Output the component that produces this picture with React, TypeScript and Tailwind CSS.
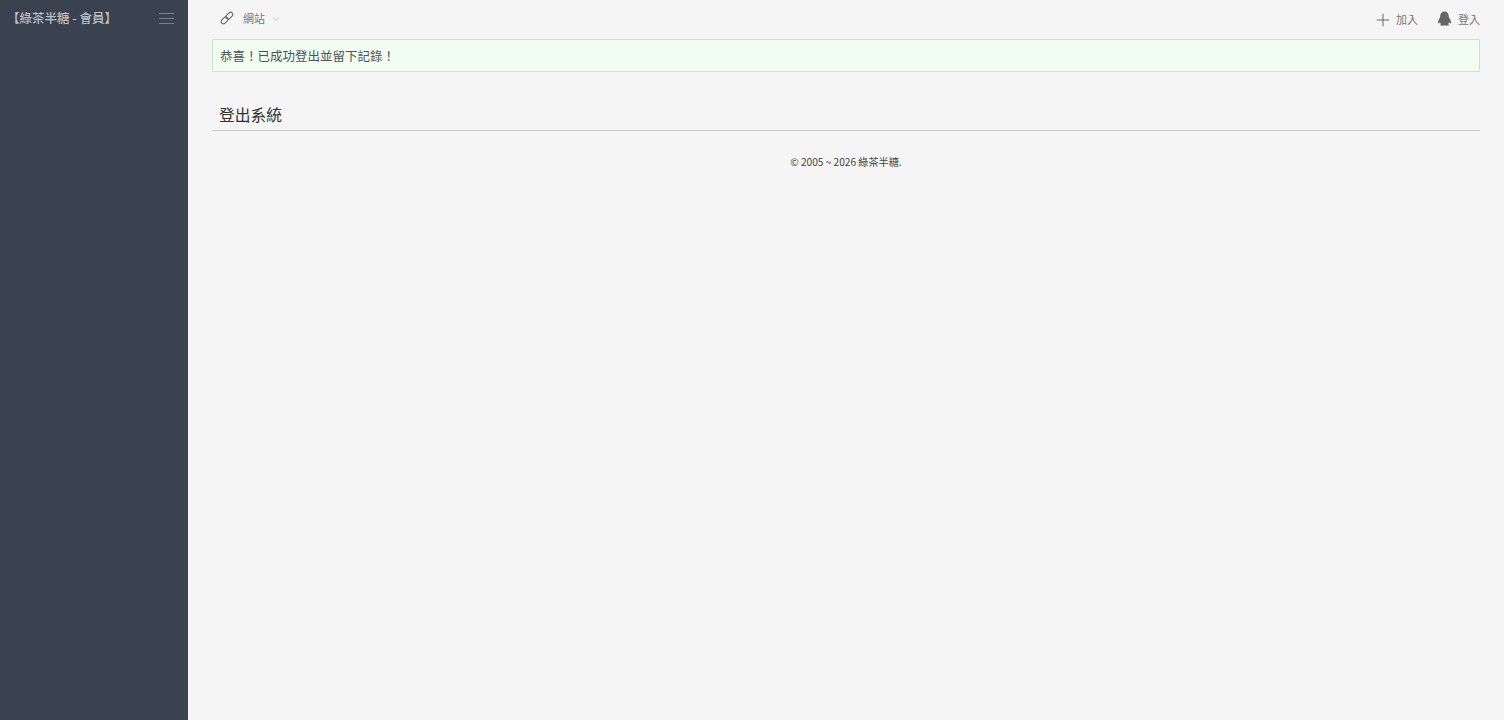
import { ChevronDown, Plus } from "lucide-react";

const font = "font-['Noto_Sans_CJK_TC',sans-serif]";

function Sidebar() {
  return (
    <aside className="w-[188px] shrink-0 bg-[#3a4250]">
      <div className="flex h-[36px] items-center justify-between pl-[7px] pr-[14px]">
        <span className="text-[12.5px] font-medium leading-none text-[#bcc0c6]">【綠茶半糖 - 會員】</span>
        <div className="flex w-[15px] flex-col gap-[4px] pt-[1px]">
          <span className="h-px bg-[#7b818b]" />
          <span className="h-px bg-[#7b818b]" />
          <span className="h-px bg-[#7b818b]" />
        </div>
      </div>
    </aside>
  );
}

function LinkIcon() {
  return (
    <svg viewBox="0 0 14 14" className="h-[14px] w-[14px] text-[#666]" fill="none" stroke="currentColor" strokeWidth="1.1">
      <rect x="0.8" y="7.2" width="7.6" height="4.4" rx="2.2" transform="rotate(-45 4.6 9.4)" />
      <rect x="5.6" y="2.4" width="7.6" height="4.4" rx="2.2" transform="rotate(-45 9.4 4.6)" />
    </svg>
  );
}

function QqIcon() {
  return (
    <svg viewBox="0 0 14 14" className="h-[15px] w-[15px] text-[#666]" fill="currentColor">
      <path d="M7 .4C4.2.4 3 2.6 3 5 3 6 2.5 6.5 1.7 8 .7 9.8.7 11.5 1.3 11.7c.5.1 1-.5 1.4-1.1.2.8.6 1.4 1.1 1.8-.9.3-1.3.6-1.1 1 .4.4 3.4.5 4.3-.1.9.6 3.9.5 4.3.1.2-.4-.2-.7-1.1-1 .5-.4.9-1 1.1-1.8.4.6.9 1.2 1.4 1.1.6-.2.6-1.9-.4-3.7C11.5 6.5 11 6 11 5 11 2.6 9.8.4 7 .4Z" />
    </svg>
  );
}

function TopBar() {
  return (
    <div className="flex h-[39px] items-start justify-between text-[11px] text-[#777]">
      <div className="flex h-[36px] items-center pl-[8px]">
        <LinkIcon />
        <span className="ml-[9px]">網站</span>
        <ChevronDown className="ml-[5px] mt-[2px] h-[12px] w-[12px] text-[#aaa]" strokeWidth={1.25} />
      </div>
      <div className="flex h-[39px] items-center">
        <Plus className="h-[20px] w-[20px] text-[#666]" strokeWidth={1.2} />
        <span className="ml-[3px]">加入</span>
        <span className="ml-[19px] -mt-[2px]">
          <QqIcon />
        </span>
        <span className="ml-[6px]">登入</span>
      </div>
    </div>
  );
}

export default function App() {
  return (
    <div className={`flex min-h-[720px] bg-[#f5f5f5] ${font}`}>
      <Sidebar />
      <main className="flex-1 px-[24px]">
        <TopBar />
        <div className="flex h-[33px] items-center rounded-[1px] border border-[#cce3c4] bg-[#f2fdf2] px-[7px] pt-[2px] text-[12.5px] text-[#4c5359]">
          {"恭喜\uFF01已成功登出並留下記錄\uFF01"}
        </div>
        <h2 className="mt-[31px] h-[28px] border-b border-[#cccccc] pl-[7px] text-[15.75px] leading-[24px] font-normal text-[#333]">
          登出系統
        </h2>
        <p className="mt-[23px] text-center text-[10.15px] leading-[16px] text-[#444]">© 2005 ~ 2026 綠茶半糖.</p>
      </main>
    </div>
  );
}
